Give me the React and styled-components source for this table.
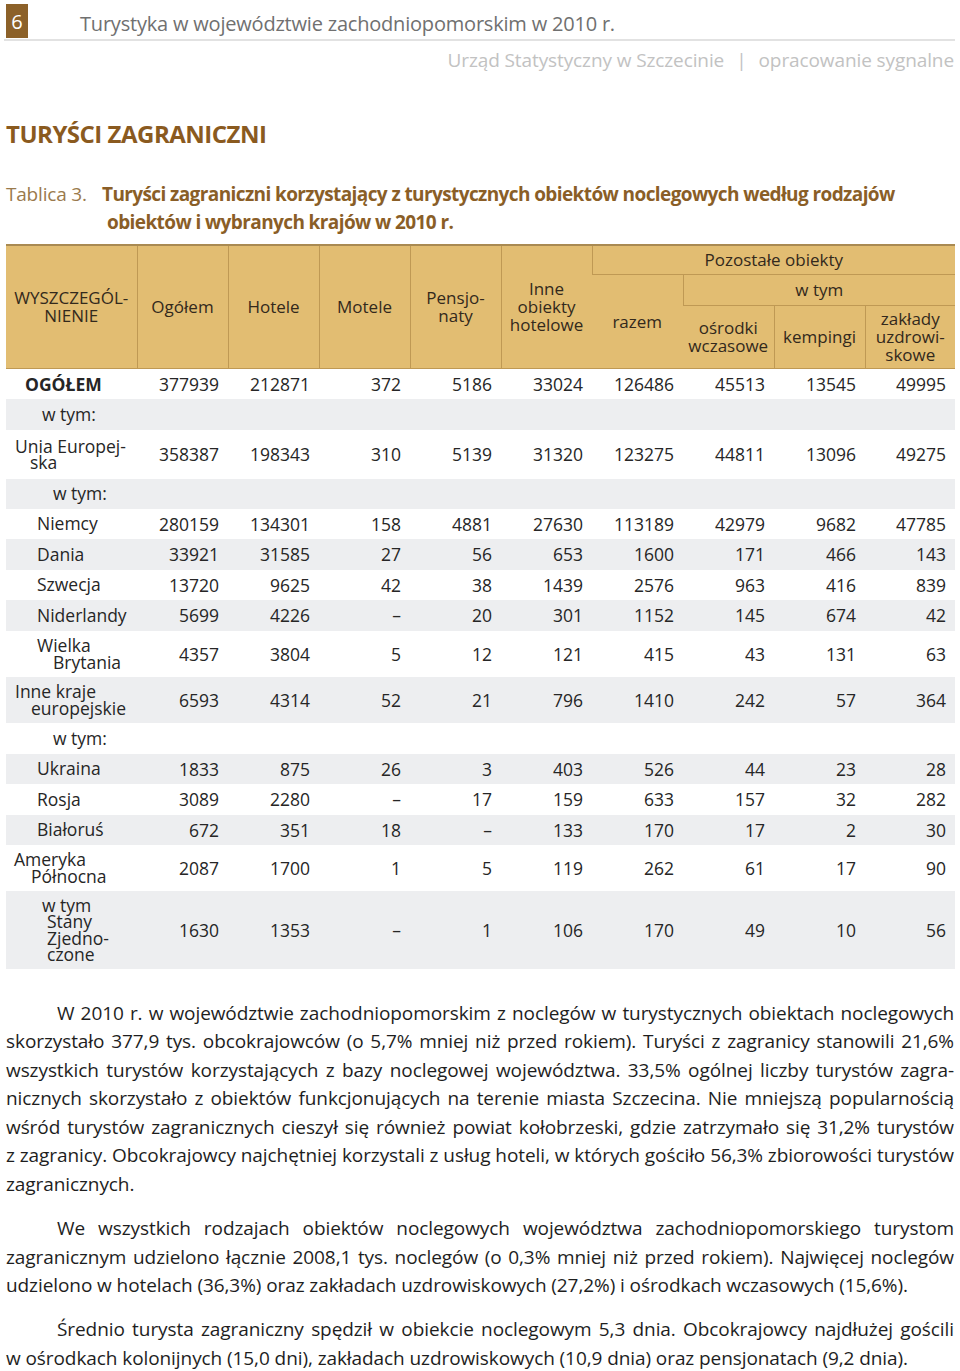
import styled, { createGlobalStyle } from 'styled-components';

const GlobalStyle = createGlobalStyle`
	body {
		margin: 0;
		background: #fff;
		font-family: 'Open Sans', 'DejaVu Sans', sans-serif;
	}
`;

const Page = styled.div`
	width: 960px;
	box-sizing: border-box;
	padding: 4px 6px 0 6px;
`;

const TopBar = styled.div`
	display: flex;
	align-items: center;
	height: 35px;
	border-bottom: 2px solid #e2e2e2;
	margin-left: -2px;
	margin-right: -1px;
	padding-left: 2px;
`;

const PageNo = styled.div`
	width: 22px;
	height: 34px;
	background: #8c6129;
	color: #fff;
	font-size: 20px;
	display: flex;
	align-items: center;
	justify-content: center;
	align-self: flex-start;
`;

const RunningTitle = styled.div`
	margin-left: 52px;
	font-size: 20px;
	color: #707070;
	margin-top: 4px;
	letter-spacing: -0.2px;
`;

const Source = styled.div`
	text-align: right;
	font-size: 19px;
	color: #c2c2c2;
	margin-top: 6px;
	line-height: 26px;
	letter-spacing: -0.1px;
`;

const Sep = styled.span`
	margin: 0 12px;
`;

const SectionTitle = styled.h2`
	margin: 46px 0 0 0;
	font-family: 'Open Sans', sans-serif;
	font-weight: bold;
	font-size: 24px;
	letter-spacing: -0.5px;
	line-height: 30px;
	color: #8a5a1f;
`;

const Caption = styled.div`
	margin-top: 31px;
	display: grid;
	grid-template-columns: 96px 1fr;
	font-family: 'Open Sans', sans-serif;
	font-size: 19px;
	line-height: 28px;
	white-space: nowrap;
`;

const CaptionLabel = styled.span`
	color: #9a7a4c;
	letter-spacing: -0.2px;
`;

const CaptionText = styled.span`
	color: #8a5e27;
	font-weight: bold;
	letter-spacing: -0.6px;
`;

const CaptionLine = styled.span`
	display: block;
	padding-left: ${(p) => p.$indent || 0}px;
`;

const Table = styled.table`
	margin-top: 8px;
	border-collapse: collapse;
	table-layout: fixed;
	width: 948px;
	font-size: 17.5px;
	color: #262626;
`;

const Head = styled.th`
	background: #e2bd72;
	font-weight: normal;
	font-size: 17px;
	color: #33291c;
	line-height: 18px;
	padding: 0;
	text-align: center;
	vertical-align: middle;
	border-left: 1px solid #bf9954;
	border-top: ${(p) => (p.$top ? '2px solid #a98a52' : '1px solid #bf9954')};
	border-bottom: 1px solid #bf9954;
	&:first-child {
		border-left: none;
	}
	height: ${(p) => p.$h}px;
`;

const HeadLine = styled.span`
	display: block;
`;

const Row = styled.tr`
	background: ${(p) => (p.$shade ? '#edeef0' : '#fff')};
	height: ${(p) => p.$h}px;
`;

const LabelCell = styled.td`
	padding: 0;
	vertical-align: middle;
	line-height: 16.5px;
	font-weight: ${(p) => (p.$bold ? 'bold' : 'normal')};
`;

const LabelLine = styled.span`
	display: block;
	padding-left: ${(p) => p.$x - 6}px;
	white-space: nowrap;
`;

const NumCell = styled.td`
	padding: 0 9px 0 0;
	text-align: right;
	vertical-align: middle;
	white-space: nowrap;
`;

const Body = styled.div`
	margin-top: 30px;
	font-size: 19px;
	letter-spacing: -0.08px;
	line-height: 28.6px;
	color: #1e1e1e;
`;

const Para = styled.div`
	margin-bottom: 15.5px;
`;

const Line = styled.div`
	white-space: nowrap;
	text-align: ${(p) => (p.$last ? 'left' : 'justify')};
	text-align-last: ${(p) => (p.$last ? 'left' : 'justify')};
	padding-left: ${(p) => (p.$first ? 51 : 0)}px;
`;

const colWidths = [131, 91, 91, 91, 91, 91, 91, 91, 91, 90];

const rows = [
	{ label: [['OGÓŁEM', 25]], bold: true, h: 30, v: ['377939', '212871', '372', '5186', '33024', '126486', '45513', '13545', '49995'] },
	{ label: [['w tym:', 42]], h: 31 },
	{ label: [['Unia Europej-', 15], ['ska', 30]], h: 49, v: ['358387', '198343', '310', '5139', '31320', '123275', '44811', '13096', '49275'] },
	{ label: [['w tym:', 53]], h: 30 },
	{ label: [['Niemcy', 37]], h: 30, v: ['280159', '134301', '158', '4881', '27630', '113189', '42979', '9682', '47785'] },
	{ label: [['Dania', 37]], h: 31, v: ['33921', '31585', '27', '56', '653', '1600', '171', '466', '143'] },
	{ label: [['Szwecja', 37]], h: 30, v: ['13720', '9625', '42', '38', '1439', '2576', '963', '416', '839'] },
	{ label: [['Niderlandy', 37]], h: 31, v: ['5699', '4226', '–', '20', '301', '1152', '145', '674', '42'] },
	{ label: [['Wielka', 37], ['Brytania', 53]], h: 46, v: ['4357', '3804', '5', '12', '121', '415', '43', '131', '63'] },
	{ label: [['Inne kraje', 15], ['europejskie', 31]], h: 46, v: ['6593', '4314', '52', '21', '796', '1410', '242', '57', '364'] },
	{ label: [['w tym:', 53]], h: 31 },
	{ label: [['Ukraina', 37]], h: 30, v: ['1833', '875', '26', '3', '403', '526', '44', '23', '28'] },
	{ label: [['Rosja', 37]], h: 31, v: ['3089', '2280', '–', '17', '159', '633', '157', '32', '282'] },
	{ label: [['Białoruś', 37]], h: 30, v: ['672', '351', '18', '–', '133', '170', '17', '2', '30'] },
	{ label: [['Ameryka', 14], ['Północna', 31]], h: 46, v: ['2087', '1700', '1', '5', '119', '262', '61', '17', '90'] },
	{ label: [['w tym', 42], ['Stany', 47], ['Zjedno-', 47], ['czone', 47]], h: 78, v: ['1630', '1353', '–', '1', '106', '170', '49', '10', '56'] },
];

const paragraphs = [
	[
		'W 2010 r. w województwie zachodniopomorskim z noclegów w turystycznych obiektach noclegowych',
		'skorzystało 377,9 tys. obcokrajowców (o 5,7% mniej niż przed rokiem). Turyści z zagranicy stanowili 21,6%',
		'wszystkich turystów korzystających z bazy noclegowej województwa. 33,5% ogólnej liczby turystów zagra-',
		'nicznych skorzystało z obiektów funkcjonujących na terenie miasta Szczecina. Nie mniejszą popularnością',
		'wśród turystów zagranicznych cieszył się również powiat kołobrzeski, gdzie zatrzymało się 31,2% turystów',
		'z zagranicy. Obcokrajowcy najchętniej korzystali z usług hoteli, w których gościło 56,3% zbiorowości turystów',
		'zagranicznych.',
	],
	[
		'We wszystkich rodzajach obiektów noclegowych województwa zachodniopomorskiego turystom',
		'zagranicznym udzielono łącznie 2008,1 tys. noclegów (o 0,3% mniej niż przed rokiem). Najwięcej noclegów',
		'udzielono w hotelach (36,3%) oraz zakładach uzdrowiskowych (27,2%) i ośrodkach wczasowych (15,6%).',
	],
	[
		'Średnio turysta zagraniczny spędził w obiekcie noclegowym 5,3 dnia. Obcokrajowcy najdłużej gościli',
		'w ośrodkach kolonijnych (15,0 dni), zakładach uzdrowiskowych (10,9 dnia) oraz pensjonatach (9,2 dnia).',
	],
];

const Lines = ({ text }) => text.split('|').map((t, i) => <HeadLine key={i}>{t}</HeadLine>);

export default function App() {
	return (
		<>
			<GlobalStyle />
			<Page>
				<TopBar>
					<PageNo>6</PageNo>
					<RunningTitle>Turystyka w województwie zachodniopomorskim w 2010 r.</RunningTitle>
				</TopBar>
				<Source>
					Urząd Statystyczny w Szczecinie<Sep>|</Sep>opracowanie sygnalne
				</Source>
				<SectionTitle>TURYŚCI ZAGRANICZNI</SectionTitle>
				<Caption>
					<CaptionLabel>Tablica 3.</CaptionLabel>
					<CaptionText>
						<CaptionLine>Turyści zagraniczni korzystający z turystycznych obiektów noclegowych według rodzajów</CaptionLine>
						<CaptionLine $indent={5}>obiektów i wybranych krajów w 2010 r.</CaptionLine>
					</CaptionText>
				</Caption>
				<Table>
					<colgroup>
						{colWidths.map((w, i) => (
							<col key={i} style={{ width: w }} />
						))}
					</colgroup>
					<thead>
						<tr>
							<Head rowSpan={3} $top>
								<Lines text="WYSZCZEGÓL-|NIENIE" />
							</Head>
							<Head rowSpan={3} $top>Ogółem</Head>
							<Head rowSpan={3} $top>Hotele</Head>
							<Head rowSpan={3} $top>Motele</Head>
							<Head rowSpan={3} $top>
								<Lines text="Pensjo-|naty" />
							</Head>
							<Head rowSpan={3} $top>
								<Lines text="Inne|obiekty|hotelowe" />
							</Head>
							<Head colSpan={4} $top $h={28}>
								Pozostałe obiekty
							</Head>
						</tr>
						<tr>
							<Head rowSpan={2}>razem</Head>
							<Head colSpan={3} $h={30}>
								w tym
							</Head>
						</tr>
						<tr>
							<Head $h={62}>
								<Lines text="ośrodki|wczasowe" />
							</Head>
							<Head $h={62}>kempingi</Head>
							<Head $h={62}>
								<Lines text="zakłady|uzdrowi-|skowe" />
							</Head>
						</tr>
					</thead>
					<tbody>
						{rows.map((r, i) => (
							<Row key={i} $shade={i % 2 === 1} $h={r.h}>
								<LabelCell $bold={r.bold}>
									{r.label.map(([t, x], j) => (
										<LabelLine key={j} $x={x}>
											{t}
										</LabelLine>
									))}
								</LabelCell>
								{(r.v || Array(9).fill('')).map((v, j) => (
									<NumCell key={j}>{v}</NumCell>
								))}
							</Row>
						))}
					</tbody>
				</Table>
				<Body>
					{paragraphs.map((p, i) => (
						<Para key={i}>
							{p.map((l, j) => (
								<Line key={j} $first={j === 0} $last={j === p.length - 1}>
									{l}
								</Line>
							))}
						</Para>
					))}
				</Body>
			</Page>
		</>
	);
}
